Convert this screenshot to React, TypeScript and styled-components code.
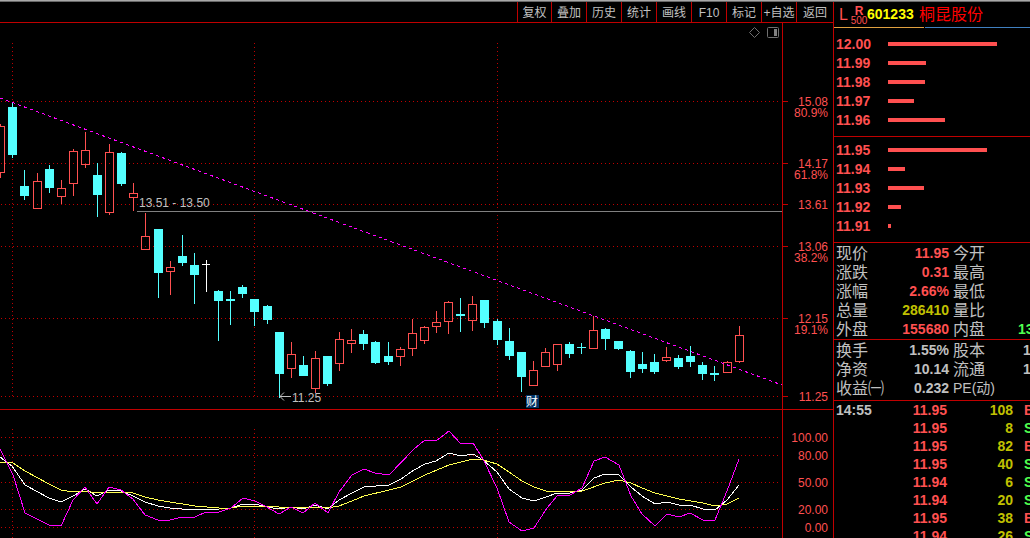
import React from "react";
import styled, { createGlobalStyle } from "styled-components";

const RED = "#ff5050";
const LINE = "#c00000";
const GREY = "#c0c0c0";
const CYAN = "#54ffff";
const GREEN = "#50ff50";
const OLIVE = "#c0c000";
const SANS = '"Liberation Sans", "Noto Sans CJK SC", sans-serif';

const GlobalStyle = createGlobalStyle`
  * { box-sizing: border-box; }
  body {
    margin: 0;
    background: #000;
    color: ${GREY};
    font-family: ${SANS};
    overflow: hidden;
  }
`;

const Page = styled.div`
  display: flex;
  flex-direction: column;
  height: 100vh;
  border-top: 1px solid #a8a8a8;
  overflow: hidden;
`;

const Body = styled.div`
  flex: 1;
  min-height: 0;
  display: grid;
  grid-template-columns: minmax(0, 1fr) 197px;
  border-top: 1px solid #686868;
`;

const ChartColumn = styled.main`
  display: flex;
  flex-direction: column;
  min-width: 0;
  overflow: hidden;
`;

const Toolbar = styled.nav`
  display: flex;
  justify-content: flex-end;
  flex: none;
  height: 21px;
  border-bottom: 1px solid ${LINE};
`;

const ToolButton = styled.button<{ $width?: number }>`
  flex: none;
  width: ${(p) => p.$width ?? 35}px;
  padding: 2px 0 0;
  border: 0;
  border-left: 1px solid ${LINE};
  background: none;
  color: ${GREY};
  font: 12px/18px ${SANS};
  white-space: nowrap;
  cursor: pointer;
`;

const ChartSvg = styled.svg`
  display: block;
  width: 100%;
  height: auto;
  flex: none;
  font: 12px ${SANS};
`;

const Side = styled.aside`
  border-left: 1px solid ${LINE};
  overflow: hidden;
`;

const Title = styled.header`
  display: flex;
  align-items: center;
  height: 25px;
  padding-left: 5px;
  white-space: nowrap;
`;

const Level = styled.span`
  width: 12px;
  color: ${RED};
  font: 16px/25px ${SANS};
`;

const Tag = styled.span`
  display: flex;
  flex-direction: column;
  align-items: center;
  width: 16px;
  padding-top: 2px;
  color: ${RED};
  font: 10px/10px ${SANS};
`;

const TagTop = styled.b`
  font-size: 12px;
`;

const Code = styled.span`
  width: 52px;
  color: #ffff00;
  font: bold 14px/25px ${SANS};
`;

const Name = styled.h1`
  margin: 0;
  color: #ff0000;
  font: 16px/25px ${SANS};
`;

const Tabs = styled.div`
  display: grid;
  grid-template-columns: 90px 1fr;
  gap: 1px;
  height: 1px;
`;

const Tab = styled.span<{ $color: string }>`
  background: ${(p) => p.$color};
`;

const Depth = styled.ul<{ $top: number }>`
  display: flex;
  flex-direction: column;
  gap: 1px;
  margin: 0;
  padding: ${(p) => p.$top}px 0 7px 2px;
  border-bottom: 1px solid ${LINE};
  list-style: none;
`;

const DepthRow = styled.li`
  display: flex;
  align-items: center;
  height: 18px;
  color: ${RED};
  font: bold 14px/18px ${SANS};
`;

const DepthPrice = styled.span`
  width: 52px;
`;

const DepthBar = styled.span`
  height: 4px;
  background: ${RED};
`;

const Facts = styled.dl<{ $bottom: number }>`
  margin: 0;
  padding: 1px 0 ${(p) => p.$bottom}px 2px;
  border-bottom: 1px solid ${LINE};
`;

const FactRow = styled.div`
  display: grid;
  grid-template-columns: 48px 65px 4px 65px 1fr;
  height: 19px;
  line-height: 19px;
  white-space: nowrap;
`;

const FactLabel = styled.dt<{ $small?: boolean }>`
  font-size: ${(p) => (p.$small ? 14 : 16)}px;
`;

const FactValue = styled.dd<{ $color: string }>`
  margin: 0;
  color: ${(p) => p.$color};
  font-size: 14px;
  font-weight: bold;
  text-align: right;
`;

const FactEdge = styled.dd<{ $color: string; $indent: number }>`
  margin: 0;
  padding-left: ${(p) => p.$indent}px;
  color: ${(p) => p.$color};
  font-size: 14px;
  font-weight: bold;
`;

const Ticks = styled.table`
  width: 100%;
  table-layout: fixed;
  border-collapse: collapse;
  font: bold 14px/18px ${SANS};
`;

const TickCell = styled.td<{ $color?: string; $align?: string; $width?: number }>`
  width: ${(p) => (p.$width ? `${p.$width}px` : "auto")};
  height: 18px;
  padding: 0 0 0 2px;
  color: ${(p) => p.$color ?? GREY};
  text-align: ${(p) => p.$align ?? "left"};
  white-space: nowrap;
`;

const TickSide = styled.span`
  padding-left: 9px;
`;

const tools = ["复权", "叠加", "历史", "统计", "画线", "F10", "标记", "+自选", "返回"];
const toolWidth = (i: number) => (i === 0 ? 34 : i === tools.length - 1 ? 37 : 35);

const asks: [string, number][] = [
  ["12.00", 109], ["11.99", 38], ["11.98", 37], ["11.97", 26], ["11.96", 57],
];
const bids: [string, number][] = [
  ["11.95", 99], ["11.94", 17], ["11.93", 36], ["11.92", 13], ["11.91", 3],
];

type Fact = { label: string; value: string; color: string; other: string; edge?: string; edgeColor?: string; indent?: number };
const prices: Fact[] = [
  { label: "现价", value: "11.95", color: RED, other: "今开" },
  { label: "涨跌", value: "0.31", color: RED, other: "最高" },
  { label: "涨幅", value: "2.66%", color: RED, other: "最低" },
  { label: "总量", value: "286410", color: OLIVE, other: "量比" },
  { label: "外盘", value: "155680", color: RED, other: "内盘", edge: "13", edgeColor: GREEN },
];
const ratios: Fact[] = [
  { label: "换手", value: "1.55%", color: GREY, other: "股本", edge: "1", indent: 5 },
  { label: "净资", value: "10.14", color: GREY, other: "流通", edge: "1", indent: 5 },
  { label: "收益㈠", value: "0.232", color: GREY, other: "PE(动)" },
];

const trades: [string, string, string, string][] = [
  ["14:55", "11.95", "108", "B"],
  ["", "11.95", "8", "S"],
  ["", "11.95", "82", "B"],
  ["", "11.95", "40", "S"],
  ["", "11.94", "6", "S"],
  ["", "11.94", "20", "S"],
  ["", "11.95", "38", "B"],
  ["", "11.94", "26", "S"],
];

// x, high, body top, body bottom, low, kind (u = up, d = down, f = flat)
type Candle = [number, number, number, number, number, "u" | "d" | "f"];
const candles: Candle[] = [
  [0, 124, 126, 173, 178, "u"], [12, 103, 107, 155, 158, "d"], [24, 170, 186, 196, 200, "d"],
  [37, 173, 181, 209, 209, "u"], [49, 165, 169, 188, 193, "d"], [61, 180, 188, 197, 204, "u"],
  [73, 149, 151, 184, 196, "u"], [85, 132, 150, 165, 168, "u"], [97, 163, 175, 195, 217, "d"],
  [109, 144, 152, 213, 215, "u"], [121, 152, 153, 184, 186, "d"], [133, 183, 193, 198, 211, "u"],
  [145, 213, 236, 250, 250, "u"], [158, 229, 229, 273, 298, "d"], [170, 261, 267, 272, 295, "u"],
  [182, 235, 256, 263, 266, "d"], [194, 253, 265, 275, 304, "d"], [206, 260, 264, 265, 292, "f"],
  [218, 290, 291, 301, 341, "d"], [230, 291, 299, 301, 325, "d"], [242, 285, 287, 294, 298, "d"],
  [254, 299, 299, 312, 326, "d"], [267, 305, 306, 320, 324, "d"], [279, 332, 332, 374, 398, "d"],
  [291, 342, 354, 369, 378, "u"], [303, 356, 365, 376, 376, "d"], [315, 351, 358, 389, 393, "u"],
  [327, 356, 356, 384, 386, "d"], [339, 332, 339, 364, 371, "u"], [351, 329, 340, 344, 353, "u"],
  [363, 330, 334, 344, 350, "d"], [375, 341, 342, 363, 364, "d"], [388, 342, 356, 362, 365, "d"],
  [400, 347, 349, 357, 366, "u"], [412, 319, 333, 349, 356, "u"], [424, 326, 327, 341, 344, "u"],
  [436, 311, 322, 327, 333, "u"], [448, 301, 302, 322, 334, "u"], [460, 298, 314, 316, 332, "d"],
  [472, 296, 304, 321, 331, "u"], [484, 300, 300, 323, 328, "d"], [497, 319, 321, 340, 345, "d"],
  [509, 328, 341, 356, 360, "d"], [521, 352, 352, 377, 392, "d"], [533, 361, 370, 386, 386, "u"],
  [545, 348, 352, 367, 367, "u"], [557, 344, 344, 365, 371, "u"], [569, 342, 344, 354, 358, "d"],
  [581, 343, 347, 348, 354, "d"], [593, 316, 330, 349, 349, "u"], [605, 328, 329, 339, 350, "d"],
  [618, 341, 341, 349, 350, "d"], [630, 350, 351, 372, 378, "d"], [642, 352, 364, 369, 373, "d"],
  [654, 354, 362, 372, 374, "d"], [666, 347, 357, 361, 362, "u"], [678, 355, 358, 367, 369, "d"],
  [690, 346, 356, 362, 367, "d"], [702, 362, 365, 374, 380, "d"], [714, 366, 373, 375, 381, "d"],
  [727, 361, 362, 373, 373, "u"], [739, 326, 335, 362, 363, "u"],
];

const K_LINE =
  "0,457 12,466 25,485 49,498 61,502 73,496 85,489 97,496 109,490 121,491 133,496 145,502 158,506 170,508 182,509 194,510 206,509 219,509 231,508 243,504 255,504 267,507 279,509 291,507 303,509 315,505 328,509 339,500 352,493 364,487 389,485 401,479 414,470 425,464 436,461 449,453 461,456 473,454 483,460 497,472 509,489 522,498 534,501 546,497 557,493 570,493 582,490 594,478 605,474 619,475 631,487 642,496 655,504 667,502 679,505 690,505 703,509 715,510 727,500 739,485";
const D_LINE =
  "0,462 13,463 25,471 49,484 61,490 73,492 85,491 97,493 121,492 133,493 145,497 158,500 170,502 195,506 219,508 231,508 243,506 267,506 279,507 303,508 315,507 328,508 339,506 352,501 364,496 389,490 401,487 425,475 449,465 473,459 483,460 497,464 509,472 522,481 534,487 546,491 557,491 572,492 582,491 605,483 619,480 631,483 642,488 655,493 667,496 679,499 703,503 715,506 727,504 739,498";
const J_LINE =
  "0,449 13,475 25,513 49,525 61,526 73,500 85,487 97,504 109,487 121,490 133,499 145,515 158,520 170,520 182,517 195,517 206,512 219,512 231,508 243,498 255,501 265,506 279,514 291,507 303,513 315,503 328,513 339,492 352,475 364,469 375,473 389,475 414,449 425,440 436,441 449,431 461,444 473,443 483,459 497,488 509,522 522,531 534,528 547,508 557,496 570,495 582,488 594,461 605,457 619,465 631,496 642,514 655,526 667,514 679,517 690,513 703,520 715,520 727,491 739,459";

const priceLevels: { y: number; price: string; ratio?: string }[] = [
  { y: 101, price: "15.08", ratio: "80.9%" },
  { y: 163, price: "14.17", ratio: "61.8%" },
  { y: 204, price: "13.61" },
  { y: 246, price: "13.06", ratio: "38.2%" },
  { y: 318, price: "12.15", ratio: "19.1%" },
  { y: 396, price: "11.25" },
];
const oscLevels: [number, string][] = [
  [437, "100.00"], [455, "80.00"], [482, "50.00"], [509, "20.00"], [527, "0.00"],
];
const months = [12, 254, 497];

function CandleMark({ data }: { data: Candle }) {
  const [x, high, top, bottom, low, kind] = data;
  const color = kind === "u" ? RED : kind === "d" ? CYAN : "#ffffff";
  return (
    <g fill={color}>
      {kind === "u" ? (
        <>
          <rect x={x} y={high} width={1} height={top - high} />
          <rect x={x} y={bottom} width={1} height={low - bottom} />
          <rect x={x - 3.5} y={top + 0.5} width={8} height={bottom - top - 1} fill="none" stroke={color} />
        </>
      ) : (
        <>
          <rect x={x} y={high} width={1} height={low - high} />
          <rect x={x - 4} y={top} width={kind === "f" ? 8 : 9} height={bottom - top} />
        </>
      )}
    </g>
  );
}

function Chart() {
  return (
    <ChartSvg viewBox="0 23 833 515" role="img" aria-label="601233 日K线与KDJ">
      <g shapeRendering="crispEdges" fill="none" stroke={LINE}>
        <g strokeDasharray="1 3">
          {priceLevels.map((l) => <path key={l.y} d={`M1 ${l.y}.5H780`} />)}
          {oscLevels.map(([y]) => <path key={y} d={`M1 ${y}.5H780`} />)}
          {months.map((x) => <path key={x} d={`M${x}.5 43V398M${x}.5 429V538`} />)}
        </g>
        <path d="M782.5 23V538M0 409.5H833" />
        {priceLevels.map((l) => <path key={l.y} d={`M783 ${l.y}.5H788`} />)}
      </g>

      <g shapeRendering="crispEdges">
        {candles.map((c) => <CandleMark key={c[0]} data={c} />)}
        <path d="M137 211.5H782" stroke="#808080" />
        <path d="M0 98L782 385" stroke="#ff00ff" strokeDasharray="3.2 3.2" />
        <g fill="none">
          <polyline points={K_LINE} stroke="#ffffff" />
          <polyline points={D_LINE} stroke="#ffff50" />
          <polyline points={J_LINE} stroke="#ff00ff" />
        </g>
        <rect x="526" y="395" width="13" height="13" fill="#003366" />
      </g>

      <path d="M291 396.5H280M284 392.5L280 396.5L284 400.5" stroke={GREY} fill="none" />
      <path d="M754.5 27.5L759.5 32.5L754.5 37.5L749.5 32.5Z" stroke="#707070" fill="none" />
      <rect x="767.5" y="27.5" width="11" height="10" rx="1" stroke="#707070" fill="none" />
      <rect x="774" y="29" width="3" height="7" fill="#808080" />

      <g fill={GREY}>
        <text x="139" y="207">13.51 - 13.50</text>
        <text x="292" y="402">11.25</text>
        <text x="526" y="406" fill="#ffffff">财</text>
      </g>
      <g fill={RED} textAnchor="end">
        {priceLevels.map((l) => (
          <React.Fragment key={l.y}>
            <text x="828" y={l.y + 5}>{l.price}</text>
            {l.ratio && <text x="828" y={l.y + 16}>{l.ratio}</text>}
          </React.Fragment>
        ))}
        {oscLevels.map(([y, label]) => <text key={y} x="828" y={y + 5}>{label}</text>)}
      </g>
    </ChartSvg>
  );
}

function DepthList({ rows, top }: { rows: [string, number][]; top: number }) {
  return (
    <Depth $top={top}>
      {rows.map(([price, size]) => (
        <DepthRow key={price}>
          <DepthPrice>{price}</DepthPrice>
          <DepthBar style={{ width: size }} />
        </DepthRow>
      ))}
    </Depth>
  );
}

function FactList({ rows, bottom }: { rows: Fact[]; bottom: number }) {
  return (
    <Facts $bottom={bottom}>
      {rows.map((f) => (
        <FactRow key={f.label}>
          <FactLabel>{f.label}</FactLabel>
          <FactValue $color={f.color}>{f.value}</FactValue>
          <span />
          <FactLabel $small={f.other.startsWith("PE")}>{f.other}</FactLabel>
          {f.edge && (
            <FactEdge $color={f.edgeColor ?? GREY} $indent={f.indent ?? 0}>{f.edge}</FactEdge>
          )}
        </FactRow>
      ))}
    </Facts>
  );
}

export default function App() {
  return (
    <>
      <GlobalStyle />
      <Page>
        <Body>
          <ChartColumn>
            <Toolbar>
              {tools.map((t, i) => (
                <ToolButton key={t} type="button" $width={toolWidth(i)}>{t}</ToolButton>
              ))}
            </Toolbar>
            <Chart />
          </ChartColumn>
          <Side>
            <Title>
              <Level>L</Level>
              <Tag><TagTop>R</TagTop>500</Tag>
              <Code>601233</Code>
              <Name>桐昆股份</Name>
            </Title>
            <Tabs>
              <Tab $color="#e0a040" />
              <Tab $color="#4080c0" />
            </Tabs>
            <DepthList rows={asks} top={7} />
            <DepthList rows={bids} top={4} />
            <FactList rows={prices} bottom={0} />
            <FactList rows={ratios} bottom={2} />
            <Ticks>
              <tbody>
                {trades.map(([time, price, volume, side], i) => (
                  <tr key={i}>
                    <TickCell $width={53}>{time}</TickCell>
                    <TickCell $width={60} $color={RED} $align="right">{price}</TickCell>
                    <TickCell $width={66} $color={OLIVE} $align="right">{volume}</TickCell>
                    <TickCell $color={side === "B" ? RED : GREEN}>
                      <TickSide>{side}</TickSide>
                    </TickCell>
                  </tr>
                ))}
              </tbody>
            </Ticks>
          </Side>
        </Body>
      </Page>
    </>
  );
}
